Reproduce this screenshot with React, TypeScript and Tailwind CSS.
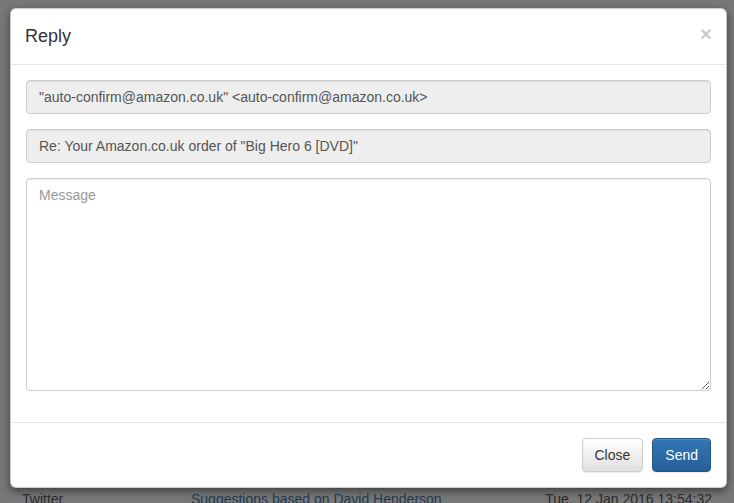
import React from 'react'

export default function App() {
  return (
    <div className="h-[503px] overflow-hidden bg-[#787878] font-['Liberation_Sans',Arial,sans-serif] text-[14px]">
      <div className="pt-[8px] pl-[10px]">
        <div className="w-[717px] bg-white border border-[rgba(0,0,0,0.2)] rounded-[6px] shadow-[0_3px_9px_rgba(0,0,0,0.5)]">
          <div className="flex items-start justify-between pl-[14px] pr-[14px] py-[15px] border-b border-[#e5e5e5]">
            <h4 className="text-[18px] leading-[25px] text-[#333]">Reply</h4>
            <button className="mt-[-1px] text-[21px] font-bold leading-none text-black opacity-20">×</button>
          </div>

          <div className="px-[15px] pt-[15px] pb-[16px]">
            <div className="mb-[15px]">
              <input
                readOnly
                value={'"auto-confirm@amazon.co.uk" <auto-confirm@amazon.co.uk>'}
                className="w-full h-[34px] px-3 py-[6px] bg-[#eee] border border-[#ccc] rounded-[4px] text-[#555] shadow-[inset_0_1px_1px_rgba(0,0,0,0.075)] outline-none"
              />
            </div>
            <div className="mb-[15px]">
              <input
                readOnly
                value={'Re: Your Amazon.co.uk order of "Big Hero 6 [DVD]"'}
                className="w-full h-[34px] px-3 py-[6px] bg-[#eee] border border-[#ccc] rounded-[4px] text-[#555] shadow-[inset_0_1px_1px_rgba(0,0,0,0.075)] outline-none"
              />
            </div>
            <div className="mb-[15px]">
              <textarea
                placeholder="Message"
                className="block w-full h-[213px] px-3 py-[6px] bg-white border border-[#ccc] rounded-[4px] text-[#555] placeholder:text-[#999] shadow-[inset_0_1px_1px_rgba(0,0,0,0.075)] outline-none resize-y leading-[20px]"
              />
            </div>
          </div>

          <div className="flex justify-end gap-[9px] px-[15px] pt-[15px] pb-[15px] border-t border-[#e5e5e5]">
            <button className="h-[34px] px-3 rounded-[4px] border border-[#ccc] bg-gradient-to-b from-white to-[#e0e0e0] text-[#333] shadow-[inset_0_1px_0_rgba(255,255,255,0.15),0_1px_1px_rgba(0,0,0,0.075)]">
              Close
            </button>
            <button className="h-[34px] px-3 rounded-[4px] border border-[#245580] bg-gradient-to-b from-[#3176b3] to-[#28609a] text-white shadow-[inset_0_1px_0_rgba(255,255,255,0.15),0_1px_1px_rgba(0,0,0,0.075)]">
              Send
            </button>
          </div>
        </div>
      </div>

      <div className="flex items-start leading-[20px] pt-[1px] pl-[22px] pr-[22px]">
        <div className="w-[169px] text-[#2a2a2a]">Twitter</div>
        <div className="flex-1 text-[#21394f]">Suggestions based on David Henderson</div>
        <div className="text-[#2a2a2a]">Tue, 12 Jan 2016 13:54:32</div>
      </div>
    </div>
  )
}
